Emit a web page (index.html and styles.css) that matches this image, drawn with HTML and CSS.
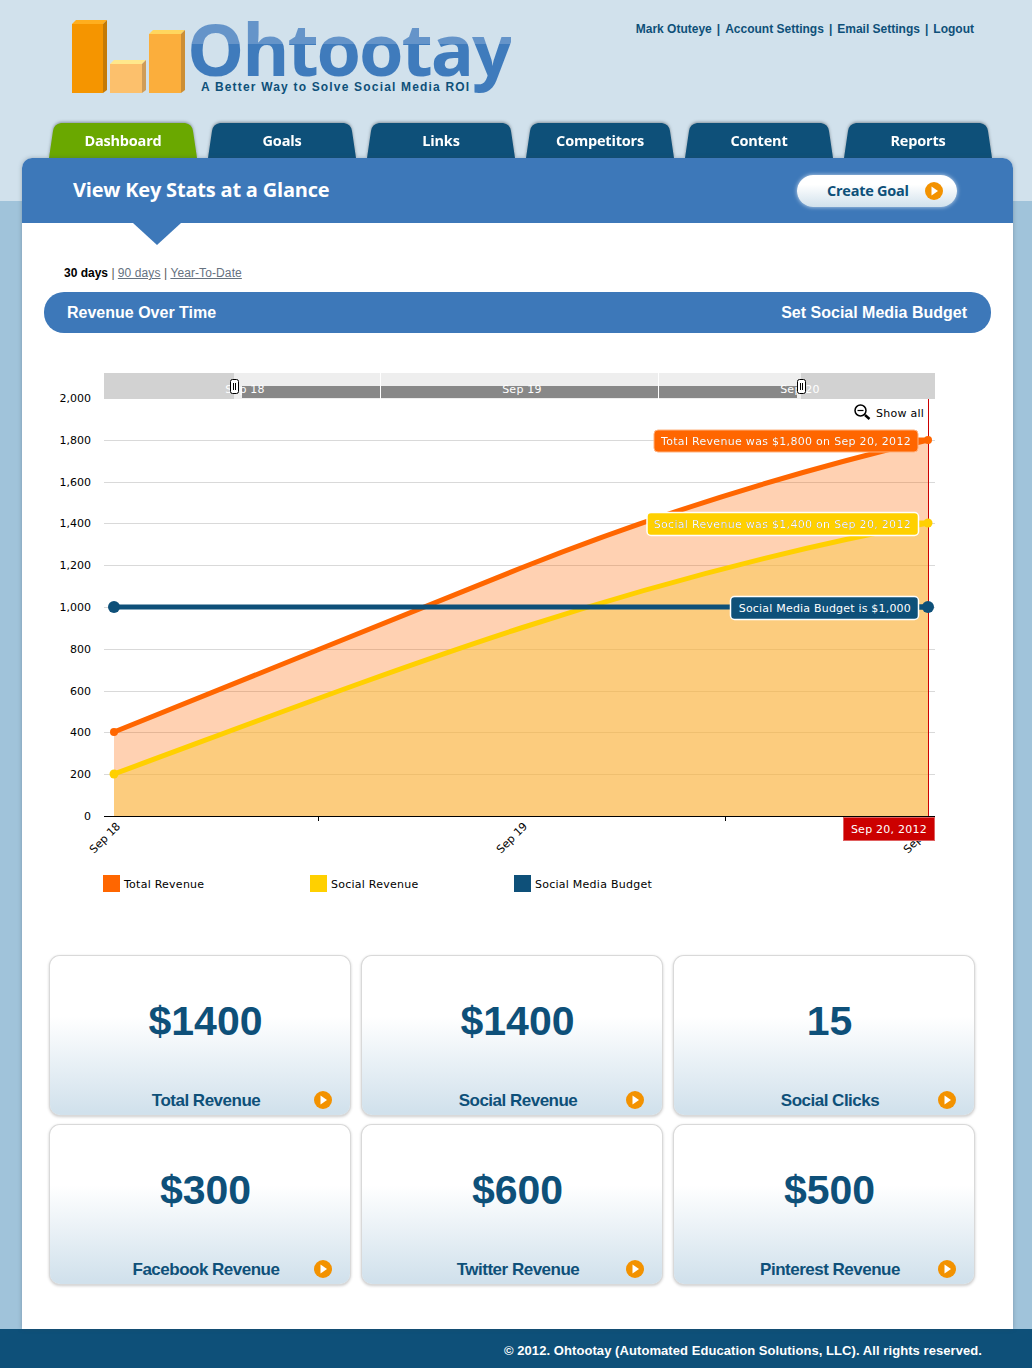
FILE: index.html
```html
<!DOCTYPE html>
<html lang="en">
<head>
    <meta charset="UTF-8">
    <meta name="viewport" content="width=device-width, initial-scale=1.0">
    <title>Ohtootay - Dashboard</title>
    <link rel="stylesheet" href="styles.css">
</head>
<body>
    <header class="top">
        <div class="logo">
            <svg class="logo-bars" width="114" height="74" viewBox="72 20 114 74">
                <polygon points="72,24 76,20 107,20 103,24" fill="#ffae1e"/>
                <rect x="72" y="24" width="31" height="69" fill="#f59500"/>
                <polygon points="103,24 107,20 107,90 103,93" fill="#c47a06"/>
                <polygon points="110,64 114,60 146,60 142,64" fill="#ffe88c"/>
                <rect x="110" y="64" width="32" height="29" fill="#fcc06c"/>
                <polygon points="142,64 146,60 146,90 142,93" fill="#cf9c58"/>
                <polygon points="149,34 153,30 185,30 181,34" fill="#ffd65e"/>
                <rect x="149" y="34" width="32" height="59" fill="#fbae3c"/>
                <polygon points="181,34 185,30 185,90 181,93" fill="#cc8e34"/>
            </svg>
            <span class="logo-name">Ohtootay</span>
            <span class="logo-tag">A Better Way to Solve Social Media ROI</span>
        </div>
        <nav class="user-links">
            <a href="#">Mark Otuteye</a> | <a href="#">Account Settings</a> | <a href="#">Email Settings</a> | <a href="#">Logout</a>
        </nav>
    </header>

    <nav class="tabs">
        <a class="tab active" href="#"><span>Dashboard</span></a>
        <a class="tab" href="#"><span>Goals</span></a>
        <a class="tab" href="#"><span>Links</span></a>
        <a class="tab" href="#"><span>Competitors</span></a>
        <a class="tab" href="#"><span>Content</span></a>
        <a class="tab" href="#"><span>Reports</span></a>
    </nav>

    <main class="panel">
        <div class="panel-head">
            <h1>View Key Stats at a Glance</h1>
            <a class="create-goal" href="#">
                Create Goal
                <svg class="go" width="18" height="18" viewBox="0 0 18 18"><circle cx="9" cy="9" r="9" fill="#f39200"/><polygon points="6.5,4.5 13,9 6.5,13.5" fill="#fff"/></svg>
            </a>
        </div>

        <div class="ranges"><b>30 days</b> | <a href="#">90 days</a> | <a href="#">Year-To-Date</a></div>

        <div class="section-bar">
            <span>Revenue Over Time</span>
            <span>Set Social Media Budget</span>
        </div>

        <svg class="chart" width="991" height="515" viewBox="22 360 991 515">
            <!-- scrollbar -->
            <rect x="104" y="373" width="831" height="26" fill="#eeeeee"/>
            <rect x="242" y="386" width="555" height="12" fill="#888888"/>
            <path d="M380.5 373V399M658.5 373V399" stroke="#fff"/>
            <text class="sb-label" x="522" y="393">Sep 19</text>
            <rect x="104" y="373" width="130" height="26" fill="#d2d2d2"/>
            <rect x="801" y="373" width="134" height="26" fill="#d2d2d2"/>
            <text class="sb-label" x="800" y="393">Sep 20</text>
            <text class="sb-label" x="245" y="393">Sep 18</text>
            <g fill="#fff" stroke="#000">
                <rect x="230.5" y="379.5" width="8" height="14" rx="2"/>
                <rect x="797.5" y="379.5" width="8" height="14" rx="2"/>
            </g>
            <path d="M233.5 383V390M235.5 383V390M800.5 383V390M802.5 383V390" stroke="#000"/>

            <!-- grid -->
            <path d="M104 440.5H935M104 482.5H935M104 523.5H935M104 565.5H935M104 607.5H935M104 649.5H935M104 691.5H935M104 732.5H935M104 774.5H935" stroke="#d9d9d9"/>
            <g class="y-labels">
                <text x="91" y="402">2,000</text>
                <text x="91" y="444">1,800</text>
                <text x="91" y="486">1,600</text>
                <text x="91" y="527">1,400</text>
                <text x="91" y="569">1,200</text>
                <text x="91" y="611">1,000</text>
                <text x="91" y="653">800</text>
                <text x="91" y="695">600</text>
                <text x="91" y="736">400</text>
                <text x="91" y="778">200</text>
                <text x="91" y="820">0</text>
            </g>

            <!-- areas -->
            <path d="M114 732C250 678 385 622 521 568C657 514 793 472 928 440V816H114Z" fill="#ff6600" fill-opacity=".3"/>
            <path d="M114 774C250 724 385 672 521 628C657 584 793 548 928 523V816H114Z" fill="#f9c84a" fill-opacity=".5"/>

            <!-- lines -->
            <path d="M114 732C250 678 385 622 521 568C657 514 793 472 928 440" fill="none" stroke="#ff6600" stroke-width="5"/>
            <path d="M114 774C250 724 385 672 521 628C657 584 793 548 928 523" fill="none" stroke="#ffd000" stroke-width="5"/>
            <path d="M114 607H928" stroke="#0e5079" stroke-width="5"/>
            <circle cx="114" cy="732" r="4" fill="#ff6600"/>
            <circle cx="114" cy="774" r="4.5" fill="#ffd000"/>
            <circle cx="114" cy="607" r="6" fill="#0e5079"/>

            <!-- axis -->
            <path d="M104 816.5H935M318.5 816V821M725.5 816V821" stroke="#000"/>
            <text class="x-label" transform="translate(94 854) rotate(-45)">Sep 18</text>
            <text class="x-label" transform="translate(501 854) rotate(-45)">Sep 19</text>
            <text class="x-label" transform="translate(908 854) rotate(-45)">Sep 20</text>

            <!-- cursor -->
            <path d="M928.5 399V816" stroke="#cc0000"/>
            <path d="M916 440H928" stroke-width="5" stroke="#ff6600"/>
            <path d="M916 523H928" stroke-width="5" stroke="#ffd000"/>
            <path d="M916 607H928" stroke-width="5" stroke="#0e5079"/>
            <circle cx="928" cy="440" r="4" fill="#ff6600"/>
            <circle cx="928" cy="523" r="4.5" fill="#ffd000"/>
            <circle cx="928" cy="607" r="6" fill="#0e5079"/>

            <!-- show all -->
            <g fill="none" stroke="#000">
                <circle cx="860.5" cy="410.5" r="5.5" stroke-width="1.5"/>
                <path d="M857.5 410.5H863.5" stroke-width="1.2"/>
                <path d="M865 415L869.5 419" stroke-width="2.5"/>
            </g>
            <text class="show-all" x="876" y="417">Show all</text>

            <!-- balloons -->
            <rect x="654" y="430" width="264" height="22" rx="4" fill="#ff6600" stroke="#ffb27f"/>
            <text class="balloon-text shaded-light" x="911" y="445">Total Revenue was $1,800 on Sep 20, 2012</text>
            <rect x="647" y="512.5" width="271.5" height="23" rx="4" fill="#ffd000" stroke="#fff" stroke-width="1.5"/>
            <text class="balloon-text shaded" x="911" y="528">Social Revenue was $1,400 on Sep 20, 2012</text>
            <rect x="730.5" y="596.5" width="188" height="23" rx="4" fill="#0e5079" stroke="#fff" stroke-width="1.5"/>
            <text class="balloon-text budget" x="911" y="612">Social Media Budget is $1,000</text>
            <rect x="843.5" y="817.5" width="91" height="23" fill="#cc0000" stroke="#e06060"/>
            <text class="date-text" x="889" y="833">Sep 20, 2012</text>
        </svg>

        <div class="legend">
            <span class="legend-item item-total"><i class="swatch orange"></i>Total Revenue</span>
            <span class="legend-item item-social"><i class="swatch yellow"></i>Social Revenue</span>
            <span class="legend-item"><i class="swatch navy"></i>Social Media Budget</span>
        </div>

        <section class="cards">
            <a class="card" href="#"><strong>$1400</strong><span>Total Revenue</span><svg class="go" width="18" height="18" viewBox="0 0 18 18"><circle cx="9" cy="9" r="9" fill="#f39200"/><polygon points="6.5,4.5 13,9 6.5,13.5" fill="#fff"/></svg></a>
            <a class="card" href="#"><strong>$1400</strong><span>Social Revenue</span><svg class="go" width="18" height="18" viewBox="0 0 18 18"><circle cx="9" cy="9" r="9" fill="#f39200"/><polygon points="6.5,4.5 13,9 6.5,13.5" fill="#fff"/></svg></a>
            <a class="card" href="#"><strong>15</strong><span>Social Clicks</span><svg class="go" width="18" height="18" viewBox="0 0 18 18"><circle cx="9" cy="9" r="9" fill="#f39200"/><polygon points="6.5,4.5 13,9 6.5,13.5" fill="#fff"/></svg></a>
            <a class="card" href="#"><strong>$300</strong><span>Facebook Revenue</span><svg class="go" width="18" height="18" viewBox="0 0 18 18"><circle cx="9" cy="9" r="9" fill="#f39200"/><polygon points="6.5,4.5 13,9 6.5,13.5" fill="#fff"/></svg></a>
            <a class="card" href="#"><strong>$600</strong><span>Twitter Revenue</span><svg class="go" width="18" height="18" viewBox="0 0 18 18"><circle cx="9" cy="9" r="9" fill="#f39200"/><polygon points="6.5,4.5 13,9 6.5,13.5" fill="#fff"/></svg></a>
            <a class="card" href="#"><strong>$500</strong><span>Pinterest Revenue</span><svg class="go" width="18" height="18" viewBox="0 0 18 18"><circle cx="9" cy="9" r="9" fill="#f39200"/><polygon points="6.5,4.5 13,9 6.5,13.5" fill="#fff"/></svg></a>
        </section>
    </main>

    <footer class="footer">© 2012. Ohtootay (Automated Education Solutions, LLC). All rights reserved.</footer>
</body>
</html>
```

FILE: styles.css
```css
* {
    box-sizing: border-box;
}
html, body {
    margin: 0;
    height: 1368px;
    overflow: hidden;
}
body {
    background: linear-gradient(#d1e1ec 201px, #a0c3da 201px);
    font-family: "Liberation Sans", Arial, sans-serif;
    color: #0e5079;
}
a {
    color: inherit;
    text-decoration: none;
}

/* header */
.top {
    display: flex;
    justify-content: space-between;
    height: 123px;
    padding: 0 56.3px 0 72px;
}
.logo {
    position: relative;
    display: flex;
    align-items: flex-start;
    padding-top: 20px;
}
.logo-bars {
    display: block;
    flex: none;
}
.logo-name {
    margin: -22px 0 0 1px;
    font: bold 72px/100px "Open Sans", sans-serif;
    letter-spacing: -2.1px;
    background: linear-gradient(#6594c9 46px, #3f7bbc 46px);
    -webkit-background-clip: text;
    background-clip: text;
    color: transparent;
}
.logo-tag {
    position: absolute;
    left: 129px;
    top: 80px;
    font-size: 12px;
    font-weight: bold;
    letter-spacing: 1.18px;
    white-space: nowrap;
}
.user-links {
    padding-top: 22px;
    font-size: 12px;
    font-weight: bold;
}
.user-links a {
    margin: 0 1.7px;
}

/* tabs */
.tabs {
    display: flex;
    gap: 11px;
    height: 35px;
    padding-left: 49px;
}
.tab {
    width: 148px;
    filter: drop-shadow(0 -1px 1.5px rgba(60, 70, 80, 0.5));
}
.tab span {
    display: block;
    height: 35px;
    padding-top: 9px;
    background: #0e5079;
    clip-path: path("M0 35L4 8Q5 1 12 0H136Q143 1 144 8L148 35Z");
    color: #fff;
    font: bold 14.5px/18px "Open Sans", sans-serif;
    letter-spacing: -0.2px;
    text-align: center;
}
.tab.active span {
    background: #6aa800;
}

/* main panel */
.panel {
    position: relative;
    width: 991px;
    height: 1171px;
    margin-left: 22px;
    padding-top: 65px;
    background: #fff;
    border-radius: 10px 10px 0 0;
    box-shadow: 0 0 4px rgba(50, 70, 90, 0.35);
}
.panel-head {
    position: absolute;
    top: 0;
    left: 0;
    right: 0;
    display: flex;
    justify-content: space-between;
    align-items: center;
    height: 65px;
    padding: 0 56px 0 51px;
    background: #3d78b9;
    border-radius: 10px 10px 0 0;
}
.panel-head::after {
    content: "";
    position: absolute;
    left: 111px;
    top: 65px;
    border-style: solid;
    border-width: 22px 24.5px 0;
    border-color: #3d78b9 transparent transparent;
}
.panel-head h1 {
    margin: -2px 0 0;
    color: #fff;
    font: bold 20px/28px "Open Sans", sans-serif;
    letter-spacing: -0.2px;
}
.create-goal {
    display: flex;
    align-items: center;
    justify-content: space-between;
    width: 160px;
    height: 32px;
    padding: 0 14px 0 30px;
    background: linear-gradient(#fff 30%, #d1e1ec);
    border-radius: 16px;
    box-shadow: 0 0 4px rgba(255, 255, 255, 0.7);
    font: bold 14.5px/20px "Open Sans", sans-serif;
    letter-spacing: -0.25px;
}
.ranges {
    height: 69px;
    padding: 42px 0 0 42px;
    color: #555;
    font-size: 12px;
    line-height: 16px;
}
.ranges b {
    color: #000;
}
.ranges a {
    color: #66727f;
    letter-spacing: 0.1px;
    text-decoration: underline;
}
.section-bar {
    display: flex;
    justify-content: space-between;
    align-items: center;
    height: 41px;
    margin: 0 22px;
    padding: 0 24px 0 23px;
    background: #3d78b9;
    border-radius: 20px;
    color: #fff;
    font-size: 16px;
    font-weight: bold;
}

/* chart */
.chart {
    display: block;
    margin-top: 27px;
    font-family: "DejaVu Sans", Verdana, sans-serif;
    font-size: 11px;
}
.sb-label {
    fill: #fff;
    letter-spacing: 0.25px;
    text-anchor: middle;
}
.y-labels text {
    fill: #000;
    text-anchor: end;
}
.x-label {
    fill: #000;
}
.show-all {
    fill: #000;
    letter-spacing: 0.25px;
}
.balloon-text {
    fill: #fff;
    letter-spacing: 0.3px;
    text-anchor: end;
}
.balloon-text.budget {
    letter-spacing: 0.2px;
}
.balloon-text.shaded {
    filter: drop-shadow(0.5px 0.5px 0 rgba(90, 70, 0, 0.8));
}
.balloon-text.shaded-light {
    filter: drop-shadow(0.5px 0.5px 0 rgba(120, 50, 0, 0.5));
}
.date-text {
    fill: #fff;
    letter-spacing: 0.25px;
    text-anchor: middle;
}
.legend {
    display: flex;
    height: 17px;
    padding-left: 81px;
    color: #000;
    font-family: "DejaVu Sans", Verdana, sans-serif;
    font-size: 11px;
    letter-spacing: 0.25px;
    line-height: 19px;
}
.legend-item {
    display: flex;
}
.item-total {
    width: 207px;
}
.item-social {
    width: 204px;
}
.swatch {
    width: 17px;
    height: 17px;
    margin-right: 4px;
}
.orange { background: #ff6600; }
.yellow { background: #ffd000; }
.navy { background: #0e5079; }

/* stat cards */
.cards {
    display: grid;
    grid-template-columns: repeat(3, 300px);
    grid-auto-rows: 159px;
    gap: 10px 12px;
    margin: 64px 0 0 28px;
}
.card {
    position: relative;
    display: block;
    background: linear-gradient(#fff 38%, #d1e1ec 98%);
    border-radius: 10px;
    box-shadow: 0 0 0 1px #d9d9d9, 0 1px 3px 1px rgba(0, 0, 0, 0.2);
    text-align: center;
}
.card strong {
    display: block;
    padding: 39px 0 0 11px;
    font-size: 41px;
    line-height: 52px;
}
.card span {
    position: absolute;
    left: 12px;
    right: 0;
    top: 135px;
    font-size: 17px;
    font-weight: bold;
    line-height: 20px;
    letter-spacing: -0.5px;
}
.card .go {
    position: absolute;
    right: 18px;
    top: 135px;
}

/* footer */
.footer {
    height: 39px;
    padding: 14px 50px 0 0;
    background: #0e5079;
    color: #fff;
    font-size: 13px;
    font-weight: bold;
    letter-spacing: 0.07px;
    line-height: 16px;
    text-align: right;
}
```
